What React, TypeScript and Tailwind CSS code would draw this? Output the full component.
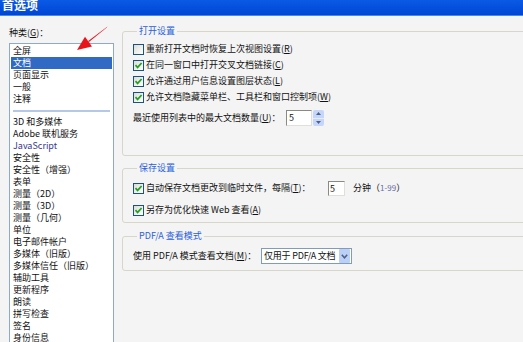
import React from "react";

function Box({ checked }: { checked: boolean }) {
  return (
    <span className="w-[11px] h-[11px] shrink-0 border border-[#1c5180] bg-gradient-to-br from-[#dcdcd6] to-white flex items-center justify-center">
      {checked && (
        <svg width="9" height="9" viewBox="0 0 9 9">
          <path d="M1.5 4.2 L3.6 6.4 L7.6 2" fill="none" stroke="#21a121" strokeWidth="1.7" />
        </svg>
      )}
    </span>
  );
}

function Key({ k }: { k: string }) {
  return (
    <span>
      (<span className="underline underline-offset-1">{k}</span>)
    </span>
  );
}

function CheckRow({ checked, text, k }: { checked: boolean; text: string; k: string }) {
  return (
    <div className="h-[16px] flex items-center gap-[2px] whitespace-nowrap">
      <Box checked={checked} />
      <span>
        {text}
        <Key k={k} />
      </span>
    </div>
  );
}

const topItems = ["全屏", "文档", "页面显示", "一般", "注释"];
const restItems = [
  "3D 和多媒体",
  "Adobe 联机服务",
  "JavaScript",
  "安全性",
  "安全性（增强）",
  "表单",
  "测量（2D）",
  "测量（3D）",
  "测量（几何）",
  "单位",
  "电子邮件帐户",
  "多媒体（旧版）",
  "多媒体信任（旧版）",
  "辅助工具",
  "更新程序",
  "朗读",
  "拼写检查",
  "签名",
  "身份信息",
];

export default function App() {
  return (
    <div className="w-[523px] h-[342px] overflow-hidden bg-[#f4f4f4] flex flex-col relative text-[9px] leading-[12px] text-[#111] font-['Noto_Sans_CJK_SC','Noto_Sans',sans-serif]">
      {/* Title bar */}
      <div className="h-[16px] shrink-0 bg-gradient-to-b from-[#0b5ae6] to-[#0046d4] border-b border-[#4a86f0] flex items-start pl-[2px]">
        <span className="text-white text-[12px] leading-[12px] font-bold -mt-[1px]">首选项</span>
      </div>

      <div className="flex flex-1 min-h-0">
        {/* Left category list */}
        <div className="w-[122px] shrink-0 pl-[9px] pt-[11px] flex flex-col">
          <div className="h-[12px] mb-[4px] whitespace-nowrap">
            种类<Key k="G" />：
          </div>
          <div className="w-[105px] flex-1 border border-[#90a9cb] bg-white p-[1px] whitespace-nowrap">
            {topItems.map((t, i) => (
              <div
                key={t}
                className={
                  i === 1
                    ? "h-[12px] pl-[2px] bg-[#316ac5] text-white"
                    : "h-[12px] pl-[2px]"
                }
              >
                {t}
              </div>
            ))}
            <div className="h-[11px] flex items-center px-[2px]">
              <div className="h-[2px] w-full bg-[#b4c8ea]" />
            </div>
            {restItems.map((t) => (
              <div key={t} className={t === "JavaScript" ? "h-[12px] pl-[2px] text-[#3a3a8c]" : "h-[12px] pl-[2px]"}>
                {t}
              </div>
            ))}
          </div>
        </div>

        {/* Right settings */}
        <div className="w-[410px] shrink-0 pt-[9px] flex flex-col">
          <fieldset className="border border-[#d6d6c9] rounded-[3px] pl-[10px] pt-[4px] pb-[29px]">
            <legend className="ml-[4px] px-[2px] text-[#2a5fdb] leading-[12px]">打开设置</legend>
            <CheckRow checked={false} text="重新打开文档时恢复上次视图设置" k="R" />
            <CheckRow checked={true} text="在同一窗口中打开交叉文档链接" k="C" />
            <CheckRow checked={true} text="允许通过用户信息设置图层状态" k="L" />
            <CheckRow checked={true} text="允许文档隐藏菜单栏、工具栏和窗口控制项" k="W" />
            <div className="h-[16px] mt-[5px] flex items-center whitespace-nowrap">
              <span className="w-[153px]">
                最近使用列表中的最大文档数量<Key k="U" />：
              </span>
              <div className="w-[26px] h-[16px] border border-t-[#8a8a80] border-l-[#8a8a80] border-r-[#e0e0d8] border-b-[#e0e0d8] bg-white pl-[2px] leading-[14px]">
                5
              </div>
              <div className="ml-[1px] w-[11px] h-[16px] flex flex-col rounded-[2px] overflow-hidden">
                <div className="flex-1 bg-[#c6d6fb] flex items-center justify-center border-b border-[#e4ecfd]">
                  <svg width="5" height="3" viewBox="0 0 5 3">
                    <path d="M0 3 L2.5 0 L5 3 Z" fill="#4d6185" />
                  </svg>
                </div>
                <div className="flex-1 bg-[#c6d6fb] flex items-center justify-center">
                  <svg width="5" height="3" viewBox="0 0 5 3">
                    <path d="M0 0 L2.5 3 L5 0 Z" fill="#4d6185" />
                  </svg>
                </div>
              </div>
            </div>
          </fieldset>

          <fieldset className="mt-[6px] border border-[#d6d6c9] rounded-[3px] pl-[10px] pt-[6px] pb-[4px]">
            <legend className="ml-[4px] px-[2px] text-[#2a5fdb] leading-[12px]">保存设置</legend>
            <div className="h-[16px] flex items-center gap-[2px] whitespace-nowrap">
              <Box checked={true} />
              <span className="w-[180px]">
                自动保存文档更改到临时文件，每隔<Key k="T" />：
              </span>
              <div className="w-[17px] h-[15px] border border-t-[#8a8a80] border-l-[#8a8a80] border-r-[#e0e0d8] border-b-[#e0e0d8] bg-white pl-[1px] leading-[13px]">
                5
              </div>
              <span className="ml-[6px]">
                分钟（<span className="text-[#6a6aa8] text-[8px]">1-99</span>）
              </span>
            </div>
            <div className="mt-[6px] h-[16px] flex items-center gap-[2px] whitespace-nowrap">
              <Box checked={true} />
              <span>
                另存为优化快速 Web 查看<Key k="A" />
              </span>
            </div>
          </fieldset>

          <fieldset className="mt-[7px] border border-[#d6d6c9] rounded-[3px] pl-[10px] pt-[6px] pb-[6px]">
            <legend className="ml-[4px] px-[2px] text-[#2a5fdb] leading-[12px]">PDF/A 查看模式</legend>
            <div className="h-[16px] flex items-center whitespace-nowrap">
              <span className="w-[128px]">
                使用 PDF/A 模式查看文档<Key k="M" />：
              </span>
              <div className="w-[91px] h-[16px] border border-[#7f9db9] bg-white flex items-center">
                <span className="flex-1 pl-[2px] tracking-[-0.2px]">仅用于 PDF/A 文档</span>
                <div className="w-[11px] h-[14px] mr-[1px] bg-[#bccff7] rounded-[1px] flex items-center justify-center">
                  <svg width="7" height="5" viewBox="0 0 7 5">
                    <path d="M0.8 0.8 L3.5 3.8 L6.2 0.8" fill="none" stroke="#4d6185" strokeWidth="1.5" />
                  </svg>
                </div>
              </div>
            </div>
          </fieldset>
        </div>
      </div>

      {/* Red annotation arrow */}
      <svg className="absolute left-0 top-0 pointer-events-none" width="523" height="342" viewBox="0 0 523 342">
        <polygon points="107.5,26.5 106.5,27.8 87.4,43.2 89.2,40.2" fill="#e8141c" />
        <polygon points="77,50 92,46.5 85,36.8" fill="#e8141c" />
      </svg>
    </div>
  );
}
